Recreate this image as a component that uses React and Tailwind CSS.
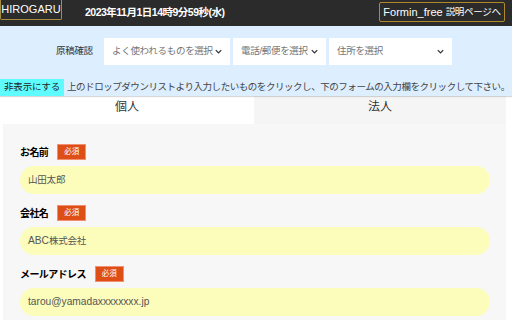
import React from 'react';

const font = { fontFamily: '"Liberation Sans", "Noto Sans CJK JP", sans-serif' };

const Chevron = () => (
  <svg className="w-[9px] h-[9px] shrink-0" viewBox="0 0 10 10" fill="none" stroke="#333" strokeWidth={1.4}>
    <path d="M2 3.5l3 3 3-3" />
  </svg>
);

const Select = ({ label, width }) => (
  <div className={`${width} h-[27px] bg-white flex items-center justify-between pl-[8px] pr-[7px] text-[9.5px] tracking-[-0.3px] text-[#757575]`}>
    <span className="whitespace-nowrap overflow-hidden">{label}</span>
    <Chevron />
  </div>
);

const Field = ({ label, value }) => (
  <div>
    <div className="flex items-center h-[16px]">
      <span className="text-[10px] tracking-[-0.6px] font-bold text-black whitespace-nowrap">{label}</span>
      <span className="ml-[9px] w-[29px] h-[16px] bg-[#dd4f17] border border-[#f09070] text-white text-[7.5px] flex items-center justify-center">
        必須
      </span>
    </div>
    <div className="mt-[6px] mr-[16px] h-[28px] rounded-full bg-[#fcfdbb] flex items-center pl-[8px] text-[10.2px] text-[#555] whitespace-nowrap">
      {value}
    </div>
  </div>
);

const App = () => {
  return (
    <div className="w-[512px] h-[320px] overflow-hidden bg-white" style={font}>
      {/* Header */}
      <div className="h-[26px] bg-[#2b2b2b] flex items-start justify-between pr-[7px]">
        <div className="flex items-start">
          <div className="h-[20px] w-[62px] border border-[#a88d3e] border-t-0 rounded-b-[2px] flex items-center justify-center text-white text-[11px] whitespace-nowrap">
            HIROGARU
          </div>
          <div className="ml-[23px] mt-[5px] text-white text-[10.5px] font-bold tracking-[-0.5px] whitespace-nowrap">
            2023年11月1日14時9分59秒(水)
          </div>
        </div>
        <div className="mt-[2px] h-[20px] w-[126px] border border-[#b08a2a] rounded-[2px] flex items-center justify-center text-white text-[11px] whitespace-nowrap">
          Formin_free<span className="ml-[3px] text-[9.5px] tracking-[-0.3px]">説明ページへ</span>
        </div>
      </div>

      {/* Dropdown panel */}
      <div className="bg-[#ddeeff] h-[70px] shadow-[0_1px_1px_rgba(0,0,0,0.15)] relative">
        <div className="flex items-center pt-[12px]">
          <span className="ml-[56px] w-[48px] text-[9.5px] tracking-[-0.3px] text-[#333] whitespace-nowrap">原稿確認</span>
          <div className="flex gap-[3px]">
            <Select label="よく使われるものを選択" width="w-[126px]" />
            <Select label="電話/郵便を選択" width="w-[93px]" />
            <Select label="住所を選択" width="w-[123px]" />
          </div>
        </div>
        <div className="flex items-center mt-[14px] h-[17px]">
          <span className="shrink-0 bg-[#5ffcff] h-[17px] w-[64px] flex items-center justify-center text-[9.5px] tracking-[-0.2px] text-[#222] whitespace-nowrap">
            非表示にする
          </span>
          <span className="ml-[3px] text-[9.5px] text-[#444] whitespace-nowrap tracking-[-0.45px]">
            上のドロップダウンリストより入力したいものをクリックし、下のフォームの入力欄をクリックして下さい。
          </span>
        </div>
      </div>

      {/* Tabs */}
      <div className="flex w-[506px] h-[28px]">
        <div className="w-[254px] bg-white flex justify-center pt-[2px] text-[12px] text-[#333]">個人</div>
        <div className="flex-1 bg-[#f5f5f5] flex justify-center pt-[2px] text-[12px] text-[#333]">法人</div>
      </div>

      {/* Form */}
      <div className="ml-[3px] w-[503px] bg-[#f7f7f7] pl-[17px] pt-[20px] flex flex-col gap-[11px] h-[200px]">
        <Field label="お名前" value={<span className="text-[9.5px] tracking-[-0.2px]">山田太郎</span>} />
        <Field label="会社名" value={<span><span>ABC</span><span className="text-[9.5px] tracking-[-0.2px]">株式会社</span></span>} />
        <Field label="メールアドレス" value="tarou@yamadaxxxxxxxx.jp" />
      </div>
    </div>
  );
};

export default App;
